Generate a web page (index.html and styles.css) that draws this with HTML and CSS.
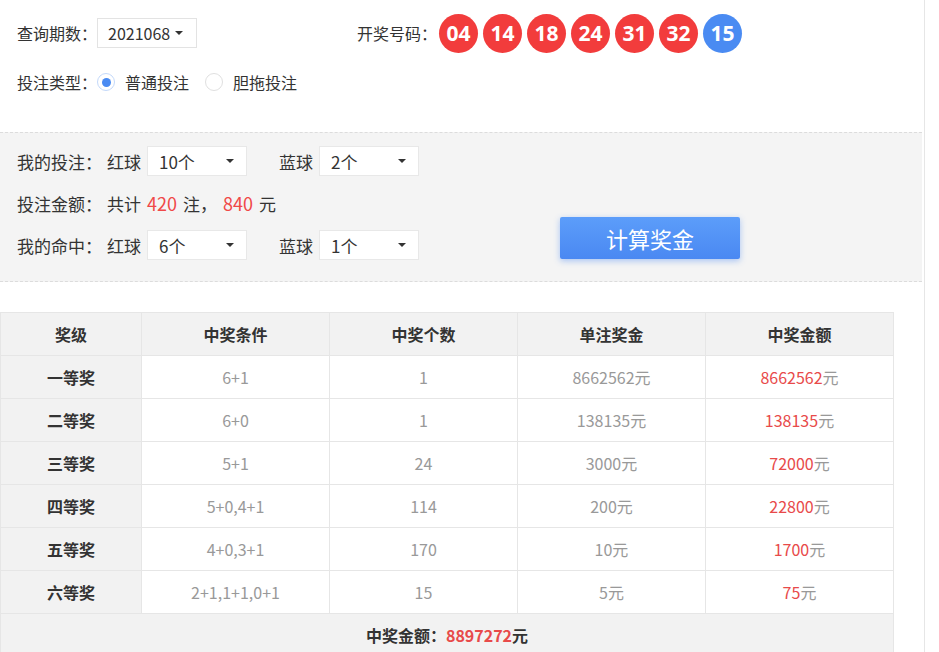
FILE: index.html
```html
<!DOCTYPE html>
<html lang="zh">
<head>
<meta charset="utf-8">
<title>双色球奖金计算</title>
<link rel="stylesheet" href="styles.css">
</head>
<body>
<div class="page">
  <div class="top">
    <div class="row row-first">
      <div class="group">
        <span class="label">查询期数：</span>
        <div class="select select-issue"><span>2021068</span><i class="caret"></i></div>
      </div>
      <div class="group draw">
        <span class="label">开奖号码：</span>
        <div class="balls">
          <span class="ball red">04</span>
          <span class="ball red">14</span>
          <span class="ball red">18</span>
          <span class="ball red">24</span>
          <span class="ball red">31</span>
          <span class="ball red">32</span>
          <span class="ball blue">15</span>
        </div>
      </div>
    </div>
    <div class="row row-type">
      <span class="label">投注类型：</span>
      <label class="radio checked"><i class="dot"></i><span>普通投注</span></label>
      <label class="radio"><i class="dot"></i><span>胆拖投注</span></label>
    </div>
  </div>

  <div class="panel">
    <div class="panel-rows">
      <div class="prow">
        <span class="plabel">我的投注：</span>
        <span class="color">红球</span>
        <div class="select select-num"><span>10个</span><i class="caret"></i></div>
        <span class="color color-blue">蓝球</span>
        <div class="select select-num"><span>2个</span><i class="caret"></i></div>
      </div>
      <div class="prow">
        <span class="plabel">投注金额：</span>
        <span>共计<em class="num">420</em>注，<em class="num">840</em>元</span>
      </div>
      <div class="prow">
        <span class="plabel">我的命中：</span>
        <span class="color">红球</span>
        <div class="select select-num"><span>6个</span><i class="caret"></i></div>
        <span class="color color-blue">蓝球</span>
        <div class="select select-num"><span>1个</span><i class="caret"></i></div>
      </div>
    </div>
    <button class="calc" type="button">计算奖金</button>
  </div>

  <table class="prize">
    <thead>
      <tr><th class="c1">奖级</th><th>中奖条件</th><th>中奖个数</th><th>单注奖金</th><th>中奖金额</th></tr>
    </thead>
    <tbody>
      <tr><th class="c1">一等奖</th><td>6+1</td><td>1</td><td>8662562元</td><td><span class="red-t">8662562</span>元</td></tr>
      <tr><th class="c1">二等奖</th><td>6+0</td><td>1</td><td>138135元</td><td><span class="red-t">138135</span>元</td></tr>
      <tr><th class="c1">三等奖</th><td>5+1</td><td>24</td><td>3000元</td><td><span class="red-t">72000</span>元</td></tr>
      <tr><th class="c1">四等奖</th><td>5+0,4+1</td><td>114</td><td>200元</td><td><span class="red-t">22800</span>元</td></tr>
      <tr><th class="c1">五等奖</th><td>4+0,3+1</td><td>170</td><td>10元</td><td><span class="red-t">1700</span>元</td></tr>
      <tr><th class="c1">六等奖</th><td>2+1,1+1,0+1</td><td>15</td><td>5元</td><td><span class="red-t">75</span>元</td></tr>
    </tbody>
    <tfoot>
      <tr><td colspan="5">中奖金额：<span class="total">8897272</span>元</td></tr>
    </tfoot>
  </table>
</div>
</body>
</html>
```

FILE: styles.css
```css
* { box-sizing: border-box; }
html, body { margin: 0; padding: 0; background: #fff; }
body {
  font-family: "Microsoft YaHei", "Noto Sans CJK SC", "Noto Sans", sans-serif;
  color: #333;
  font-size: 16px;
}
.page {
  width: 925px;
  min-height: 652px;
  border-right: 1px solid #e6e6e6;
  overflow: hidden;
}
.top {
  height: 132px;
  padding: 18px 0 0 17px;
}
.row { display: flex; align-items: center; }
.row-first { height: 30px; }
.group { display: flex; align-items: center; }
.label { font-size: 16px; color: #333; white-space: nowrap; }
.select {
  display: flex;
  align-items: center;
  background: #fff;
  border: 1px solid #e3e3e3;
  height: 30px;
  color: #333;
}
.select-issue {
  width: 100px;
  padding-left: 10px;
  font-size: 16px;
}
.select-issue .caret { margin-left: 5px; }
.caret {
  display: inline-block;
  width: 0; height: 0;
  border-left: 4px solid transparent;
  border-right: 4px solid transparent;
  border-top: 4px solid #333;
}
.draw { margin-left: 160px; }
.balls { display: flex; gap: 5px; margin-left: 2px; }
.ball {
  width: 39px; height: 39px;
  border-radius: 50%;
  color: #fff;
  font-weight: bold;
  font-size: 21px;
  display: flex; align-items: center; justify-content: center;
  font-family: "Microsoft YaHei", "Noto Sans", "Open Sans", sans-serif;
}
.ball.red { background: #f23c3c; }
.ball.blue { background: #4a8bf2; }

.row-type { margin-top: 23px; height: 22px; }
.radio { display: flex; align-items: center; font-size: 16px; }
.radio + .radio { margin-left: 16px; }
.radio .dot {
  width: 18px; height: 18px;
  border-radius: 50%;
  border: 1px solid #e0e0e0;
  background: #fff;
  margin-right: 10px;
  display: flex; align-items: center; justify-content: center;
}
.radio.checked .dot { border-color: #c4d9fa; }
.radio.checked .dot::after {
  content: "";
  width: 9px; height: 9px; border-radius: 50%;
  background: #4a8bf2;
}

.panel {
  width: 922px;
  background: #f4f4f4;
  border-top: 1px dashed #dcdcdc;
  border-bottom: 1px dashed #dcdcdc;
  display: flex;
  align-items: flex-end;
  padding: 13px 0 21px 17px;
}
.panel-rows { width: 543px; display: flex; flex-direction: column; gap: 12px; }
.prow { display: flex; align-items: center; height: 30px; font-size: 17px; color: #333; }
.plabel { white-space: nowrap; margin-right: 5px; }
.color { margin-right: 6px; }
.color-blue { margin-left: 32px; }
.select-num {
  width: 100px;
  justify-content: space-between;
  padding: 0 12px 0 11px;
  font-size: 17px;
  border-color: #e8e8e8;
}
.num { font-style: normal; color: #f04848; font-size: 18px; margin: 0 6px; }

.calc {
  width: 180px; height: 42px;
  margin-bottom: 1px;
  border: none;
  border-radius: 2px;
  background: linear-gradient(#5c9dfa, #4a88f2);
  color: #fff;
  font-family: inherit;
  font-size: 22px;
  box-shadow: 0 2px 6px rgba(74, 136, 242, 0.45);
  cursor: pointer;
}

.prize {
  margin-top: 30px;
  width: 894px;
  border-collapse: collapse;
  table-layout: fixed;
  font-size: 16px;
}
.prize th, .prize td {
  height: 43px;
  border: 1px solid #e6e6e6;
  text-align: center;
  padding: 0;
}
.prize thead th {
  background: #f2f2f2;
  font-weight: bold;
  color: #333;
}
.prize th.c1 { width: 141px; }
.prize tbody th {
  background: #f2f2f2;
  font-weight: bold;
  color: #333;
}
.prize tbody td { color: #999; background: #fff; }
.red-t { color: #e84a4a; }
.prize tfoot td {
  background: #f2f2f2;
  font-weight: bold;
  color: #333;
}
.total { color: #e84a4a; }
```
